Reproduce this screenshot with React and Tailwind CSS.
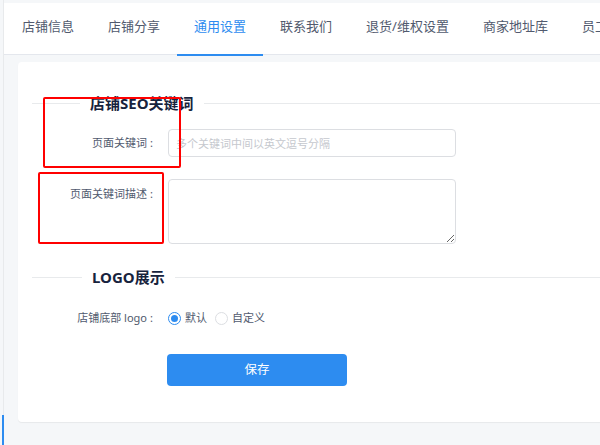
import React from "react";

const font = { fontFamily: '"Noto Sans", "Noto Sans CJK SC", sans-serif' };

function Legend({ title, lineW }) {
  return (
    <div className="flex items-center h-[22px] pl-[14px]">
      <div className="h-px bg-[#e8eaec]" style={{ width: lineW }} />
      <div className="px-[10px] text-[15px] font-bold text-[#17233d] leading-[22px] whitespace-nowrap">{title}</div>
      <div className="h-px flex-1 bg-[#e8eaec]" />
    </div>
  );
}

function Label({ text, className = "" }) {
  return (
    <div className={"w-[150px] flex justify-end pr-[13px] text-[11px] text-[#515a6e] whitespace-nowrap " + className}>
      <span>{text}</span>
      <span className="ml-[1px] w-[7px] text-center">:</span>
    </div>
  );
}

function Radio({ checked, label }) {
  return (
    <label className="flex items-center gap-[4px] text-[11px] text-[#515a6e]">
      {checked ? (
        <span className="w-[13px] h-[13px] rounded-full border border-[#2d8cf0] flex items-center justify-center bg-white">
          <span className="w-[7px] h-[7px] rounded-full bg-[#2d8cf0]" />
        </span>
      ) : (
        <span className="w-[13px] h-[13px] rounded-full border border-[#dcdee2] bg-white" />
      )}
      <span>{label}</span>
    </label>
  );
}

export default function App() {
  const tabs = ["店铺信息", "店铺分享", "通用设置", "联系我们", "退货/维权设置", "商家地址库", "员工管理"];
  return (
    <div className="relative w-[600px] h-[445px] overflow-hidden bg-[#f5f7f9]" style={font}>
      <div className="ml-[3px] h-full border-l border-[#e8eaec] pt-[3px]">
        <nav className="h-[52px] bg-white border-b border-[#e4e7ed] flex pl-[1px] whitespace-nowrap">
          {tabs.map((t, i) => (
            <div
              key={t}
              className={
                "relative h-full flex items-center pb-[3px] px-[17px] text-[13px] " +
                (i === 2 ? "text-[#2d8cf0]" : "text-[#515a6e]")
              }
            >
              {t}
              {i === 2 && <span className="absolute left-0 right-0 bottom-[-2px] h-[2px] bg-[#2d8cf0]" />}
            </div>
          ))}
        </nav>
        <div className="pl-[14px] pt-[7px]">
          <div className="w-[590px] h-[360px] bg-white rounded-[4px] shadow-[0_1px_1px_rgba(0,0,0,0.06)] pt-[30px]">
            <Legend title="店铺SEO关键词" lineW={48} />
            <div className="flex items-center mt-[15px]">
              <Label text="页面关键词" />
              <input
                className="w-[288px] h-[28px] border border-[#dcdee2] rounded-[4px] px-[7px] text-[11px] outline-none placeholder:text-[#c5c8ce]"
                placeholder="多个关键词中间以英文逗号分隔"
                style={font}
              />
            </div>
            <div className="flex items-start mt-[22px]">
              <Label text="页面关键词描述" className="leading-[20px] pt-[5px]" />
              <textarea className="w-[288px] h-[65px] border border-[#dcdee2] rounded-[4px] px-[7px] py-[4px] text-[11px] outline-none" style={font} />
            </div>
            <div className="mt-[22px]">
              <Legend title="LOGO展示" lineW={50} />
            </div>
            <div className="flex items-center mt-[20px] h-[20px]">
              <Label text="店铺底部 logo" />
              <div className="flex items-center gap-[8px]">
                <Radio checked label="默认" />
                <Radio label="自定义" />
              </div>
            </div>
            <div className="mt-[26px] pl-[149px]">
              <button className="w-[180px] h-[32px] rounded-[4px] bg-[#2d8cf0] text-white text-[12.5px]" style={font}>保存</button>
            </div>
          </div>
        </div>
      </div>
      <div className="absolute left-[2px] top-[415px] w-[2px] h-[30px] bg-[#2d8cf0]" />
      <div className="absolute left-[43px] top-[97px] w-[138px] h-[71px] border-2 border-[#f00] rounded-[2px]" />
      <div className="absolute left-[38px] top-[172px] w-[126px] h-[72px] border-2 border-[#f00] rounded-[2px]" />
    </div>
  );
}
